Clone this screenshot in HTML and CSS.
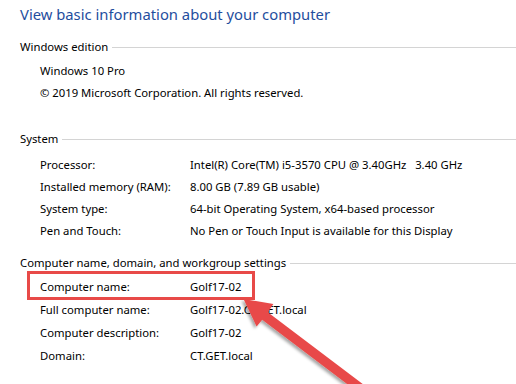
FILE: index.html
```html
<!DOCTYPE html>
<html lang="en">
<head>
  <meta charset="UTF-8">
  <meta name="viewport" content="width=device-width, initial-scale=1.0">
  <title>System</title>
  <link rel="stylesheet" href="styles.css">
</head>
<body>
  <div class="page">
    <h1 class="title">View basic information about your computer</h1>

    <section class="group group-edition">
      <h2 class="group-heading">Windows edition</h2>
      <div class="row"><span class="label">Windows 10 Pro</span></div>
      <div class="row"><span class="label">© 2019 Microsoft Corporation. All rights reserved.</span></div>
    </section>

    <section class="group group-system">
      <h2 class="group-heading">System</h2>
      <div class="row"><span class="label">Processor:</span><span class="value">Intel(R) Core(TM) i5-3570 CPU @ 3.40GHz&nbsp;&nbsp;&nbsp;3.40 GHz</span></div>
      <div class="row"><span class="label">Installed memory (RAM):</span><span class="value">8.00 GB (7.89 GB usable)</span></div>
      <div class="row"><span class="label">System type:</span><span class="value">64-bit Operating System, x64-based processor</span></div>
      <div class="row"><span class="label">Pen and Touch:</span><span class="value">No Pen or Touch Input is available for this Display</span></div>
    </section>

    <section class="group group-name">
      <h2 class="group-heading">Computer name, domain, and workgroup settings</h2>
      <div class="row tall"><span class="label">Computer name:</span><span class="value">Golf17-02</span></div>
      <div class="row tall"><span class="label">Full computer name:</span><span class="value">Golf17-02.CT.GET.local</span></div>
      <div class="row tall"><span class="label">Computer description:</span><span class="value">Golf17-02</span></div>
      <div class="row tall"><span class="label">Domain:</span><span class="value">CT.GET.local</span></div>
    </section>

    <!-- screenshot annotation drawn on top -->
    <svg class="markup" width="516" height="384" viewBox="0 0 516 384">
      <defs>
        <filter id="shadow" x="-20%" y="-20%" width="140%" height="140%">
          <feDropShadow dx="-2" dy="2" stdDeviation="1.4" flood-color="#000" flood-opacity="0.35"/>
        </filter>
      </defs>
      <rect x="28.5" y="272.5" width="225" height="26" fill="none" stroke="#e84a48" stroke-width="3"/>
      <polygon filter="url(#shadow)" fill="#e84a48"
        points="243.5,299 273.4,304.1 267.8,312.2 382.8,399.2 377.2,406.8 262.2,319.7 256.6,326.5"/>
    </svg>
  </div>
</body>
</html>
```

FILE: styles.css
```css
body {
  margin: 0;
  background: #fff;
  font-family: "Segoe UI", "Noto Sans", sans-serif;
  color: #000;
  overflow: hidden;
}

.page {
  position: relative;
  width: 516px;
  height: 384px;
  padding: 4px 0 0 20px;
  box-sizing: border-box;
}

.title {
  margin: 0 0 14px;
  font-size: 14.8px;
  line-height: 20px;
  font-weight: normal;
  color: #1f4e9e;
}

.group-heading {
  display: flex;
  align-items: center;
  margin: 0 0 6px;
  height: 16px;
  font-size: 11.3px;
  font-weight: normal;
  white-space: nowrap;
}

.group-heading::after {
  content: "";
  flex: 1;
  margin: 2px 0 0 4px;
  border-top: 1px solid #d4d4d4;
}

.group-edition {
  margin-bottom: 26px;
}

.group-system {
  margin-bottom: 12px;
}

.group-system .group-heading {
  margin-bottom: 8px;
}

.group-name .group-heading {
  margin-bottom: 5px;
}

.row {
  display: flex;
  padding-left: 20px;
  height: 22px;
  line-height: 22px;
  font-size: 11.3px;
  white-space: nowrap;
}

.row.tall {
  height: 23px;
  line-height: 23px;
}

.label {
  width: 150px;
  flex: none;
}

.value {
  flex: none;
}

.markup {
  position: absolute;
  top: 0;
  left: 0;
}
```
